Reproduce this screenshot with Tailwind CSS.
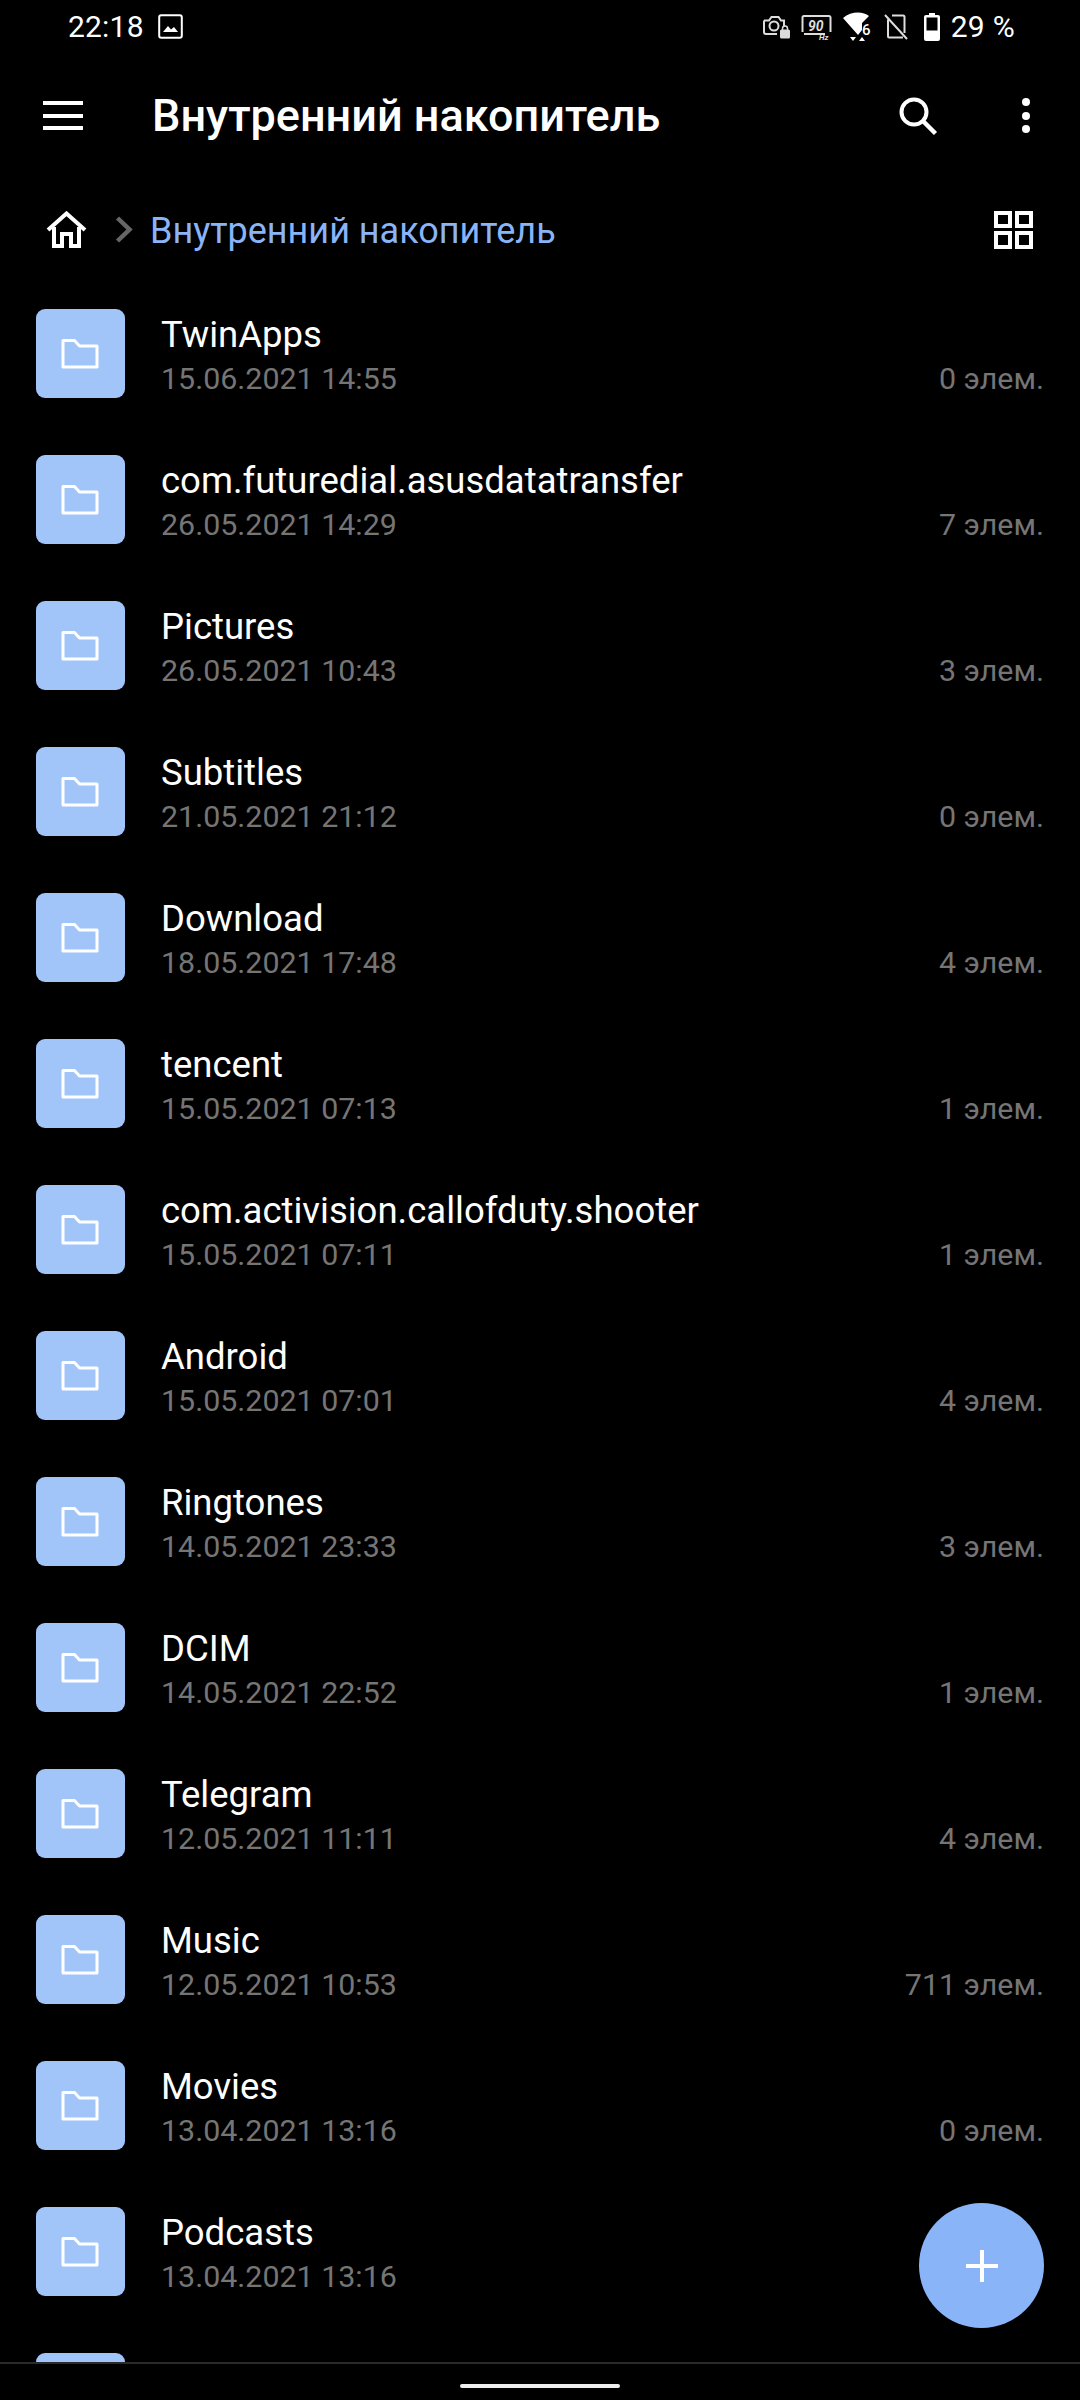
<!DOCTYPE html>
<html lang="en">
<head>
    <meta charset="UTF-8">
    <title>Файлы</title>
    <script src="https://cdn.jsdelivr.net/npm/@tailwindcss/browser@4"></script>
</head>
<body class="bg-black">
<div class="relative w-[1080px] h-[2400px] bg-black text-white flex flex-col overflow-hidden font-['Roboto',sans-serif]">

    <!-- status bar -->
    <div class="h-[54px] flex items-center pl-[68px] pr-[65px] shrink-0">
        <span class="text-[30px] leading-[54px] tracking-[0.2px]">22:18</span>
        <svg class="ml-[14px] -mt-[2px]" width="25" height="25" viewBox="0 0 25 25" fill="none"><rect x="1.2" y="1.2" width="22.6" height="22.6" rx="2" stroke="#fff" stroke-width="2"/><path d="M5 18l5-6 3 3.5 3-2.5 4 5z" fill="#fff"/></svg>
        <div class="ml-auto flex items-center">
            <svg width="29" height="26" viewBox="0 0 29 26" fill="none"><path d="M2 6.5h5l2.5-3.5h7l2.500 3.500h3v6M15 20H4a2 2 0 0 1-2-2V6.500" stroke="#ddd" stroke-width="2"/><circle cx="12" cy="12" r="4.500" stroke="#ddd" stroke-width="2"/><rect x="18" y="15.500" width="10" height="9" rx="1.500" fill="#ddd"/><path d="M20.500 16v-1.500a2.500 2.500 0 0 1 5 0V16" stroke="#ddd" stroke-width="1.500"/></svg>
            <svg class="ml-[10px]" width="31" height="27" viewBox="0 0 31 27" fill="none"><path d="M3 20h21M1.500 18V3.500a1.500 1.500 0 0 1 1.500-1.500h25a1.500 1.500 0 0 1 1.500 1.500V18" stroke="#ddd" stroke-width="2"/><text x="7" y="17" font-size="14" font-style="italic" font-weight="700" fill="#ddd" font-family="Roboto">90</text><text x="18" y="26" font-size="8" font-style="italic" font-weight="700" fill="#ddd" font-family="Roboto">Hz</text></svg>
            <svg class="ml-[11px]" width="30" height="30" viewBox="0 0 30 30" fill="none"><path d="M0 6C8-1 20-1 26 4l-7 7v7l-4 5z" fill="#fff"/><text x="19" y="23" font-size="15" font-weight="500" fill="#fff" font-family="Roboto">6</text><path d="M7 25h6l-3 4zM16 29h6l-3-4z" fill="#fff"/></svg>
            <svg class="ml-[11px]" width="24" height="26" viewBox="0 0 24 26" fill="none"><path d="M4 5.500V22.500a1 1 0 0 0 1 1H19M8 1.500h11a1.500 1.500 0 0 1 1.500 1.500v16M1 1l22 24" stroke="#ddd" stroke-width="2"/></svg>
            <svg class="ml-[15px]" width="18" height="30" viewBox="0 0 18 30" fill="none"><path d="M6 1h6v2h3a2 2 0 0 1 2 2v22a2 2 0 0 1-2 2H3a2 2 0 0 1-2-2V5a2 2 0 0 1 2-2h3z" fill="#fff"/><rect x="3.500" y="5.500" width="11" height="13" fill="#000"/></svg>
            <span class="ml-[10px] text-[30px] leading-[54px] tracking-[0.3px]">29 %</span>
        </div>
    </div>

    <!-- toolbar -->
    <div class="h-[124px] flex items-center pl-[43px] shrink-0 relative">
        <div class="w-[40px] flex flex-col gap-[8.5px] -mt-[1px]">
            <div class="h-[4px] bg-white"></div>
            <div class="h-[4px] bg-white"></div>
            <div class="h-[4px] bg-white"></div>
        </div>
        <h1 class="ml-[69px] text-[45px] leading-[48px] font-medium">Внутренний накопитель</h1>
        <svg class="ml-auto" width="40" height="40" viewBox="0 0 40 40" fill="none"><circle cx="16" cy="16" r="12.500" stroke="#fff" stroke-width="4"/><path d="M25 25l12.500 12.500" stroke="#fff" stroke-width="4.500"/></svg>
        <div class="ml-[84px] mr-[50px] flex flex-col gap-[5.500px] -mt-[1px]">
            <div class="w-[8px] h-[8px] rounded-full bg-white"></div>
            <div class="w-[8px] h-[8px] rounded-full bg-white"></div>
            <div class="w-[8px] h-[8px] rounded-full bg-white"></div>
        </div>
    </div>

    <!-- breadcrumb -->
    <div class="h-[102px] flex items-center pl-[46px] pr-[46px] shrink-0">
        <svg width="41" height="37" viewBox="0 0 41 37" fill="none"><path d="M2 19L20.500 2.500 39 19" stroke="#fff" stroke-width="4"/><path d="M8 16v19h8V23h9v12h8V16" stroke="#fff" stroke-width="4"/></svg>
        <svg class="ml-[28px]" width="18" height="27" viewBox="0 0 18 27" fill="none"><path d="M2.500 2l12 11.500-12 11.500" stroke="#666" stroke-width="4.500"/></svg>
        <span class="ml-[17px] mt-[4px] text-[36px] leading-[40px] text-[#8ab4f8]">Внутренний накопитель</span>
        <div class="ml-auto grid grid-cols-2 gap-[3px] w-[39px] h-[38px] mr-[1px] mt-[1px]">
            <div class="border-[4px] border-white"></div>
            <div class="border-[4px] border-white"></div>
            <div class="border-[4px] border-white"></div>
            <div class="border-[4px] border-white"></div>
        </div>
    </div>

    <!-- file list -->
    <div id="list" class="flex-1 overflow-hidden"></div>

    <!-- nav bar -->
    <div class="h-[38px] shrink-0 border-t-[2px] border-[#2b2b2b] flex justify-center pt-[20px]">
        <div class="w-[160px] h-[4px] rounded-full bg-[#eeeeee]"></div>
    </div>

    <!-- new folder button -->
    <div class="absolute left-[919px] top-[2203px] w-[125px] h-[125px] rounded-full bg-[#8ab4f8] flex items-center justify-center">
        <svg width="32" height="32" viewBox="0 0 32 32"><path d="M16 0v32M0 16h32" stroke="#fff" stroke-width="4"/></svg>
    </div>
</div>

<script>
    const folders = [
        ['TwinApps', '15.06.2021 14:55', '0 элем.'],
        ['com.futuredial.asusdatatransfer', '26.05.2021 14:29', '7 элем.'],
        ['Pictures', '26.05.2021 10:43', '3 элем.'],
        ['Subtitles', '21.05.2021 21:12', '0 элем.'],
        ['Download', '18.05.2021 17:48', '4 элем.'],
        ['tencent', '15.05.2021 07:13', '1 элем.'],
        ['com.activision.callofduty.shooter', '15.05.2021 07:11', '1 элем.'],
        ['Android', '15.05.2021 07:01', '4 элем.'],
        ['Ringtones', '14.05.2021 23:33', '3 элем.'],
        ['DCIM', '14.05.2021 22:52', '1 элем.'],
        ['Telegram', '12.05.2021 11:11', '4 элем.'],
        ['Music', '12.05.2021 10:53', '711 элем.'],
        ['Movies', '13.04.2021 13:16', '0 элем.'],
        ['Podcasts', '13.04.2021 13:16', ''],
        ['Notifications', '', '']
    ];

    const list = document.getElementById('list');
    folders.forEach(([name, date, count]) => {
        const row = document.createElement('div');
        row.className = 'h-[146px] flex items-center pl-[36px] pr-[36px] shrink-0';
        row.innerHTML = `
            <div class="w-[89px] h-[89px] rounded-[9px] bg-[#a1c4f9] flex items-center justify-center shrink-0">
                <svg class="-ml-[2px]" width="38" height="31" viewBox="0 0 38 31" fill="none"><path d="M2 2.500h11.500l5 5.500H36v21H2z" stroke="#fff" stroke-width="3" stroke-linejoin="round"/></svg>
            </div>
            <div class="ml-[36px] flex-1 min-w-0 pt-[7px]">
                <div class="text-[36.5px] leading-[44px] h-[44px]">${name}</div>
                <div class="text-[30.4px] leading-[44px] h-[44px] text-[#757575] flex justify-between">
                    <span>${date}</span><span>${count}</span>
                </div>
            </div>`;
        list.appendChild(row);
    });
</script>
</body>
</html>
